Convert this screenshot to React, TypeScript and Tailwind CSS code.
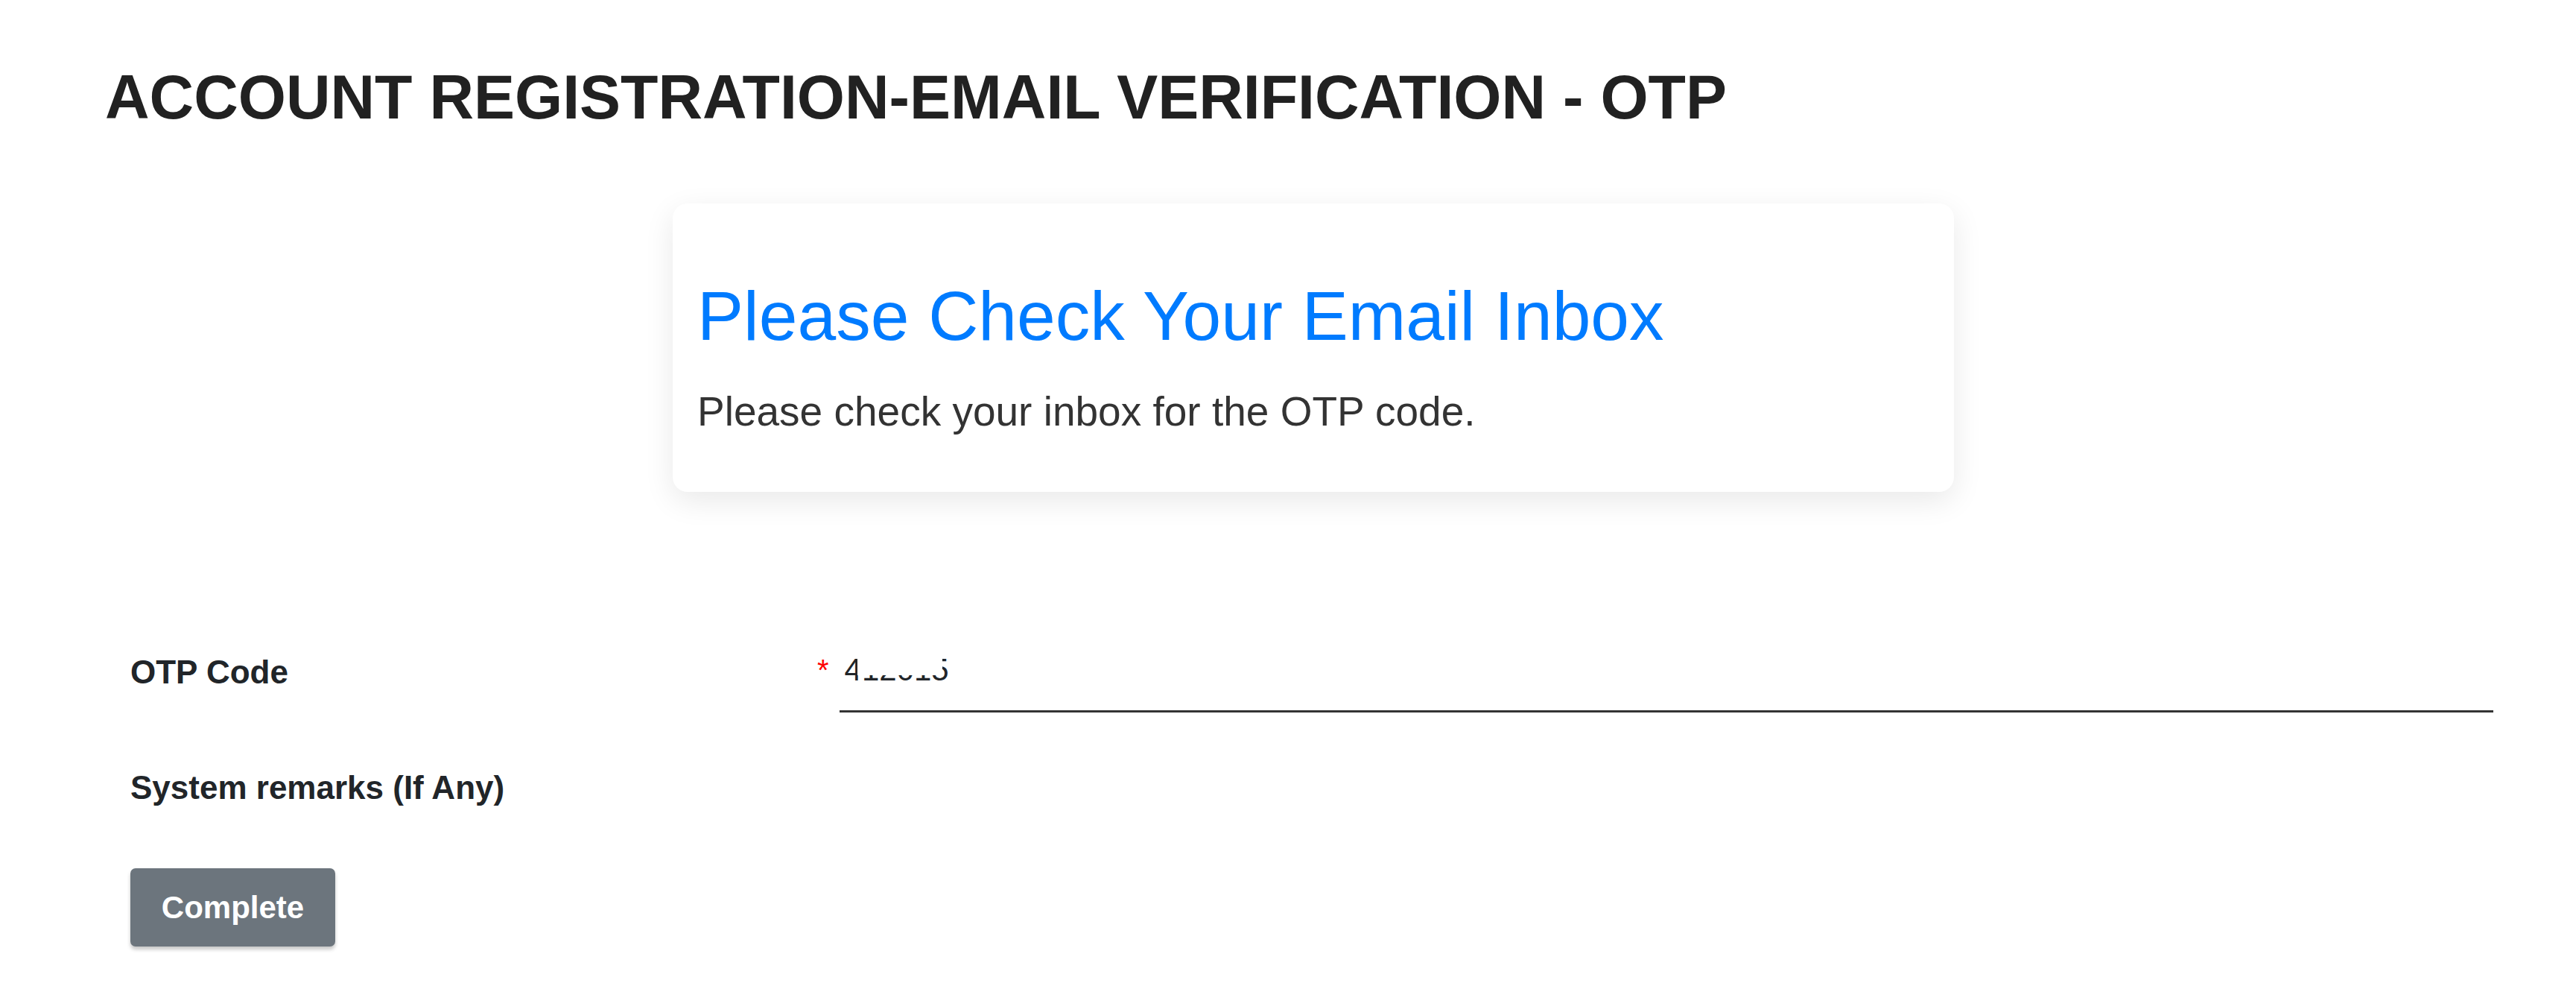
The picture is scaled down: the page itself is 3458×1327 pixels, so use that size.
import React from 'react';

const OtpVerification: React.FC = () => {
  return (
    <div className="min-h-screen bg-white font-['Liberation_Sans',Arial,sans-serif] pb-[40px]">
      {/* Page title */}
      <h1 className="pl-[141px] pt-[82px] text-[82.5px] leading-[96px] font-bold text-[#212121]">
        ACCOUNT REGISTRATION-EMAIL VERIFICATION - OTP
      </h1>

      {/* Info card */}
      <div className="mt-[95px] ml-[903px] w-[1720px] rounded-[20px] bg-white px-[33px] pt-[96px] pb-[75px] shadow-[0_12px_40px_rgba(0,0,0,0.09)]">
        <h2 className="text-[93px] leading-[110px] text-[#007bff]">Please Check Your Email Inbox</h2>
        <p className="mt-[40px] text-[55px] leading-[66px] text-[#333333]">
          Please check your inbox for the OTP code.
        </p>
      </div>

      {/* Form */}
      <div className="mt-[216px] pl-[175px] pr-[111px]">
        <div className="flex items-start">
          <label className="w-[922px] shrink-0 text-[44px] leading-[52px] font-bold text-[#212529]">OTP Code</label>
          <span className="-mt-[3px] text-[40px] leading-[52px] text-[#ff0000]">*</span>
          <div className="relative ml-[14px] flex-1">
            <input
              readOnly
              value="412015"
              className="block h-[80px] w-full border-b-[3px] border-[#333333] bg-transparent pl-[7px] pt-0 pb-[32px] text-[42px] text-[#212529] outline-none"
            />
            {/* masked digits */}
            <div className="absolute left-[24px] top-[4px] h-[26px] w-[114px] bg-white" />
          </div>
        </div>

        <div className="mt-[75px] text-[44px] leading-[52px] font-bold text-[#212529]">System remarks (If Any)</div>

        <button className="mt-[82px] flex h-[105px] w-[275px] items-center justify-center rounded-[7px] bg-[#6c757d] text-[42px] font-bold text-white shadow-[0_4px_5px_rgba(0,0,0,0.22)]">
          Complete
        </button>
      </div>
    </div>
  );
};

export default function App() {
  return <OtpVerification />;
}
